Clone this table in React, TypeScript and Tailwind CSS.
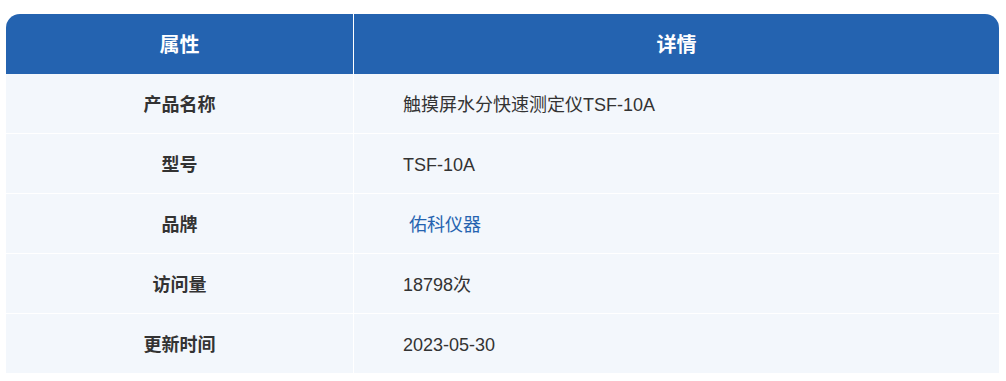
import React from "react";

const rows: { k: string; v: React.ReactNode }[] = [
  { k: "产品名称", v: "触摸屏水分快速测定仪TSF-10A" },
  { k: "型号", v: "TSF-10A" },
  { k: "品牌", v: <span className="ml-[6px] text-[#2563b0]">佑科仪器</span> },
  { k: "访问量", v: "18798次" },
  { k: "更新时间", v: "2023-05-30" },
];

export default function App() {
  return (
    <div
      className="w-[1006px] h-[381px] bg-white pt-[14px] pl-[6px]"
      style={{ fontFamily: '"Liberation Sans", "Noto Sans CJK SC", sans-serif' }}
    >
      <div className="w-[993px]">
        <div className="flex h-[60px] rounded-t-[14px] overflow-hidden bg-[#2463b0] text-white text-[20px] font-bold">
          <div className="w-[348px] border-r border-white flex items-center justify-center pt-[2px]">属性</div>
          <div className="flex-1 flex items-center justify-center pt-[2px]">详情</div>
        </div>
        {rows.map((r) => (
          <div key={r.k} className="flex h-[60px] border-b border-white bg-[#f3f7fc] text-[18px] text-[#333333]">
            <div className="w-[348px] border-r border-white flex items-center justify-center font-bold pt-[4px]">{r.k}</div>
            <div className="flex-1 flex items-center pl-[49px] pt-[4px]">{r.v}</div>
          </div>
        ))}
      </div>
    </div>
  );
}
